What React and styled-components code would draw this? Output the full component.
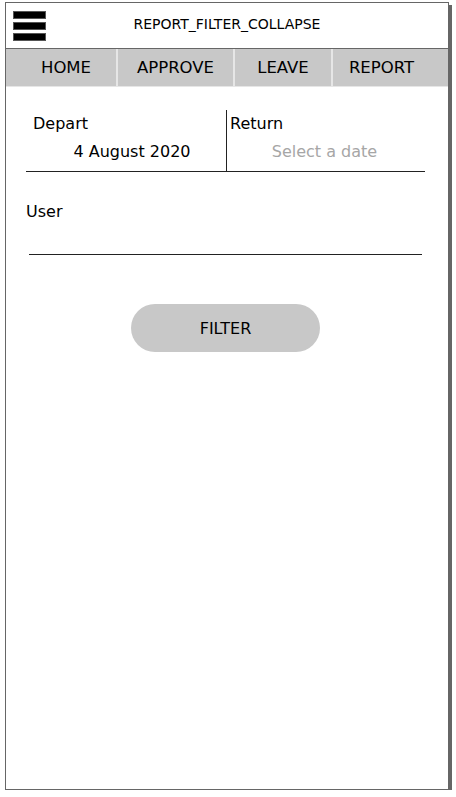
import React, { useState } from 'react';
import styled, { createGlobalStyle } from 'styled-components';

const COLORS = {
  frame: '#666666',
  text: '#000000',
  muted: '#a6a6a6',
  navBg: '#c8c8c8',
  navDivider: '#e6e6e6',
  line: '#222222',
};

const GlobalStyle = createGlobalStyle`
  body {
    margin: 0;
    background: #ffffff;
    font-family: "DejaVu Sans", Verdana, sans-serif;
    color: ${COLORS.text};
  }
`;

// Phone frame
const Frame = styled.div`
  margin: 2px 0 0 5px;
  width: 444px;
  height: 788px;
  box-sizing: border-box;
  border: 1px solid ${COLORS.frame};
  box-shadow: 3px 3px 0 ${COLORS.frame};
  background: #ffffff;
  display: flex;
  flex-direction: column;
`;

// Title bar
const Header = styled.header`
  position: relative;
  height: 46px;
  box-sizing: border-box;
  padding-bottom: 4px;
  border-bottom: 1px solid ${COLORS.frame};
  display: flex;
  align-items: center;
  justify-content: center;
`;

const MenuButton = styled.button`
  position: absolute;
  left: 7px;
  top: 8px;
  width: 33px;
  height: 30px;
  padding: 0;
  border: none;
  background: none;
  display: flex;
  flex-direction: column;
  justify-content: space-between;
  cursor: pointer;
`;

const Bar = styled.span`
  display: block;
  height: 8px;
  background: #000000;
  border: 1px solid #555;
  box-sizing: border-box;
`;

const Title = styled.h1`
  margin: 0;
  font-size: 14px;
  font-weight: 400;
`;

// Tab navigation
const Nav = styled.nav`
  display: grid;
  grid-template-columns: 110px 117px 98px 1fr;
  height: 38px;
  box-sizing: border-box;
  background: ${COLORS.navBg};
  border-bottom: 1px solid ${COLORS.navDivider};
`;

const Tab = styled.a`
  display: flex;
  align-items: center;
  justify-content: center;
  padding-left: ${({ shift }) => (shift > 0 ? shift : 0)}px;
  padding-right: ${({ shift }) => (shift < 0 ? -shift : 0)}px;
  font-size: 16.5px;
  color: ${COLORS.text};
  text-decoration: none;
  border-left: ${({ first }) => (first ? 'none' : `2px solid ${COLORS.navDivider}`)};
  cursor: pointer;
`;

// Filter form
const Content = styled.main`
  padding: 23px 23px 0 20px;
  display: flex;
  flex-direction: column;
`;

const DateRow = styled.div`
  display: grid;
  grid-template-columns: 200px 1fr;
  border-bottom: 1px solid ${COLORS.line};
  height: 62px;
  box-sizing: border-box;
`;

const DateField = styled.div`
  display: flex;
  flex-direction: column;
  padding: ${({ divided }) => (divided ? '4px 0 0 3px' : '4px 0 0 7px')};
  border-left: ${({ divided }) => (divided ? `1px solid ${COLORS.line}` : 'none')};
`;

const Label = styled.label`
  font-size: 16px;
  line-height: 20px;
`;

const DateValue = styled.div`
  margin-top: 8px;
  font-size: 16px;
  line-height: 20px;
  text-align: center;
  padding-left: ${({ offset }) => (offset > 0 ? offset : 0)}px;
  padding-right: ${({ offset }) => (offset < 0 ? -offset : 0)}px;
  color: ${({ placeholder }) => (placeholder ? COLORS.muted : COLORS.text)};
`;

const UserField = styled.div`
  margin-top: 30px;
  display: flex;
  flex-direction: column;
`;

const UserInput = styled.input`
  margin: 15px 3px 0 3px;
  height: 17px;
  border: none;
  border-bottom: 1px solid ${COLORS.line};
  outline: none;
  font-family: inherit;
  font-size: 16px;
  padding: 0;
`;

const FilterButton = styled.button`
  align-self: center;
  margin: 49px 0 0 0;
  width: 189px;
  height: 48px;
  border: none;
  border-radius: 24px;
  background: ${COLORS.navBg};
  font-family: inherit;
  font-size: 16px;
  color: ${COLORS.text};
  cursor: pointer;
`;

const tabs = [
  { name: 'HOME', shift: 10 },
  { name: 'APPROVE', shift: 0 },
  { name: 'LEAVE', shift: 0 },
  { name: 'REPORT', shift: -18 },
];

export default function App() {
  const [user, setUser] = useState('');

  return (
    <>
      <GlobalStyle />
      <Frame>
        <Header>
          <MenuButton aria-label="menu">
            <Bar />
            <Bar />
            <Bar />
          </MenuButton>
          <Title>REPORT_FILTER_COLLAPSE</Title>
        </Header>

        <Nav>
          {tabs.map((t, i) => (
            <Tab key={t.name} first={i === 0} shift={t.shift}>
              {t.name}
            </Tab>
          ))}
        </Nav>

        <Content>
          <DateRow>
            <DateField>
              <Label>Depart</Label>
              <DateValue offset={5}>4 August 2020</DateValue>
            </DateField>
            <DateField divided>
              <Label>Return</Label>
              <DateValue placeholder offset={-6}>Select a date</DateValue>
            </DateField>
          </DateRow>

          <UserField>
            <Label>User</Label>
            <UserInput value={user} onChange={(e) => setUser(e.target.value)} />
          </UserField>

          <FilterButton>FILTER</FilterButton>
        </Content>
      </Frame>
    </>
  );
}
